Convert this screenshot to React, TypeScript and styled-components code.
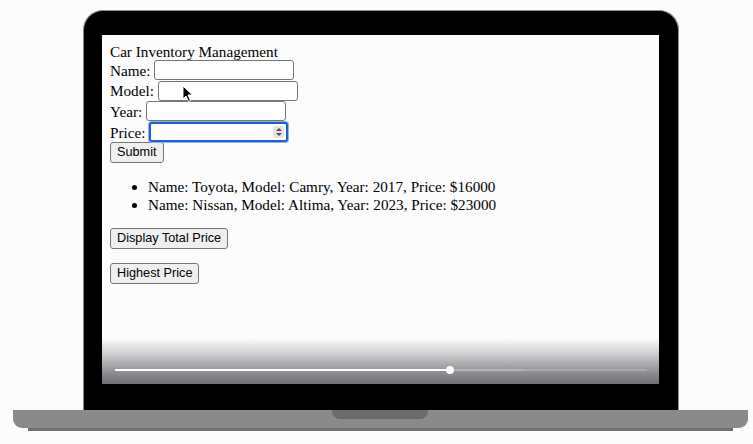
import React from "react";
import styled, { createGlobalStyle } from "styled-components";

const Global = createGlobalStyle`
  html, body { margin: 0; padding: 0; background: #fbfbfb; }
  body { width: 753px; height: 444px; overflow: hidden; }
`;

const Stage = styled.div`
  width: 753px;
  height: 444px;
  display: flex;
  flex-direction: column;
  background: #fbfbfb;
`;

const Lid = styled.div`
  margin: 10px 0 0 83px;
  width: 596px;
  height: 400px;
  box-sizing: border-box;
  background: #000;
  border: 1px solid #8c8c8c;
  border-bottom: none;
  border-radius: 20px 20px 0 0;
  padding: 24px 19px 26px 18px;
  display: flex;
`;

const Screen = styled.div`
  position: relative;
  flex: 1;
  background: #fcfcfc;
  overflow: hidden;
  display: flex;
  flex-direction: column;
`;

const Page = styled.div`
  padding: 8px;
  font-family: "Liberation Serif", "Times New Roman", serif;
  font-size: 15.2px;
  color: #000;
  display: flex;
  flex-direction: column;
`;

const Title = styled.div`
  height: 17px;
  line-height: 17px;
`;

const FieldRow = styled.div`
  height: 20.6px;
  display: flex;
  align-items: center;
  gap: 4px;
  line-height: 17px;
`;

const Input = styled.input<{ $w: number; $focused?: boolean }>`
  width: ${(p) => p.$w}px;
  height: 20px;
  box-sizing: border-box;
  margin: 0;
  border: ${(p) => (p.$focused ? "2px solid #1b5fd6" : "1px solid #767676")};
  box-shadow: ${(p) => (p.$focused ? "0 0 0 1px #8fb0ea" : "none")};
  border-radius: 3px;
  background: #fff;
  outline: none;
  padding: 0 4px;
  font-size: 12px;
  display: flex;
`;

const PriceWrap = styled.div`
  position: relative;
  display: flex;
`;

const Spinner = styled.div`
  position: absolute;
  right: 4px;
  top: 4px;
  width: 11px;
  height: 12px;
  background: #e4e4e4;
  border-radius: 2px;
  display: flex;
  flex-direction: column;
  align-items: center;
  justify-content: center;
  gap: 2px;
`;

const Arrow = styled.div<{ $up?: boolean }>`
  width: 0;
  height: 0;
  border-left: 3px solid transparent;
  border-right: 3px solid transparent;
  ${(p) => (p.$up ? "border-bottom: 3px solid #555;" : "border-top: 3px solid #555;")}
`;

const Button = styled.button`
  font-family: "Liberation Sans", Arial, sans-serif;
  font-size: 12.7px;
  line-height: 15px;
  height: 20.5px;
  box-sizing: border-box;
  padding: 1px 6px;
  margin: 0;
  background: #efefef;
  border: 1px solid #767676;
  border-radius: 3px;
  color: #000;
  align-self: flex-start;
`;

const List = styled.ul`
  margin: 15px 0 13.5px 0;
  padding-left: 38px;
  line-height: 18.5px;
`;

const Block = styled.div`
  display: flex;
  margin-bottom: 14.5px;
`;

const Fade = styled.div`
  position: absolute;
  left: 0;
  right: 0;
  bottom: 0;
  height: 46px;
  background: linear-gradient(
    to bottom,
    rgba(252, 252, 252, 0) 0%,
    rgba(200, 200, 202, 0.9) 35%,
    #8e8e92 75%,
    #6e6e73 100%
  );
  display: flex;
  align-items: center;
  padding: 18px 12px 0 13px;
  box-sizing: border-box;
`;

const Track = styled.div`
  position: relative;
  flex: 1;
  height: 2px;
  background: #a9a9ad;
  display: flex;
`;

const Buffered = styled.div`
  height: 2px;
  background: #b4b4b7;
`;

const Played = styled.div`
  height: 2px;
  background: #fff;
`;

const Knob = styled.div`
  position: absolute;
  top: -3px;
  width: 8px;
  height: 8px;
  margin-left: -4px;
  border-radius: 50%;
  background: #fff;
`;

const Cursor = styled.svg`
  position: absolute;
  left: 80px;
  top: 50px;
`;

const Base = styled.div`
  margin-left: 13px;
  width: 735px;
  height: 18px;
  background: #8a8a8a;
  border-radius: 0 0 9px 9px;
  display: flex;
  justify-content: center;
`;

const Notch = styled.div`
  margin-left: -2px;
  width: 96px;
  height: 9px;
  background: #6b6b6b;
  border-radius: 0 0 8px 8px;
`;

const Lip = styled.div`
  margin-left: 28px;
  width: 705px;
  height: 3px;
  background: #727272;
`;

const cars = [
  { name: "Toyota", model: "Camry", year: 2017, price: 16000 },
  { name: "Nissan", model: "Altima", year: 2023, price: 23000 },
];

export default function App() {
  const played = 335;
  const buffered = 73;
  return (
    <Stage>
      <Global />
      <Lid>
        <Screen>
          <Page>
            <Title>Car Inventory Management</Title>
            <FieldRow>
              Name: <Input $w={140} />
            </FieldRow>
            <FieldRow>
              Model: <Input $w={140} />
            </FieldRow>
            <FieldRow>
              Year: <Input $w={140} />
            </FieldRow>
            <FieldRow>
              Price:
              <PriceWrap>
                <Input $w={139} $focused />
                <Spinner>
                  <Arrow $up />
                  <Arrow />
                </Spinner>
              </PriceWrap>
            </FieldRow>
            <Button>Submit</Button>
            <List>
              {cars.map((c) => (
                <li key={c.name}>
                  Name: {c.name}, Model: {c.model}, Year: {c.year}, Price: ${c.price}
                </li>
              ))}
            </List>
            <Block>
              <Button>Display Total Price</Button>
            </Block>
            <Block>
              <Button>Highest Price</Button>
            </Block>
          </Page>
          <Cursor width="12" height="18" viewBox="0 0 12 18">
            <path d="M1 1 L1 14 L4 11 L6.5 16.5 L8.5 15.5 L6 10 L10.5 10 Z" fill="#000" stroke="#fff" strokeWidth="1" />
          </Cursor>
          <Fade>
            <Track>
              <Played style={{ width: played }} />
              <Buffered style={{ width: buffered }} />
              <Knob style={{ left: played }} />
            </Track>
          </Fade>
        </Screen>
      </Lid>
      <Base>
        <Notch />
      </Base>
      <Lip />
    </Stage>
  );
}
